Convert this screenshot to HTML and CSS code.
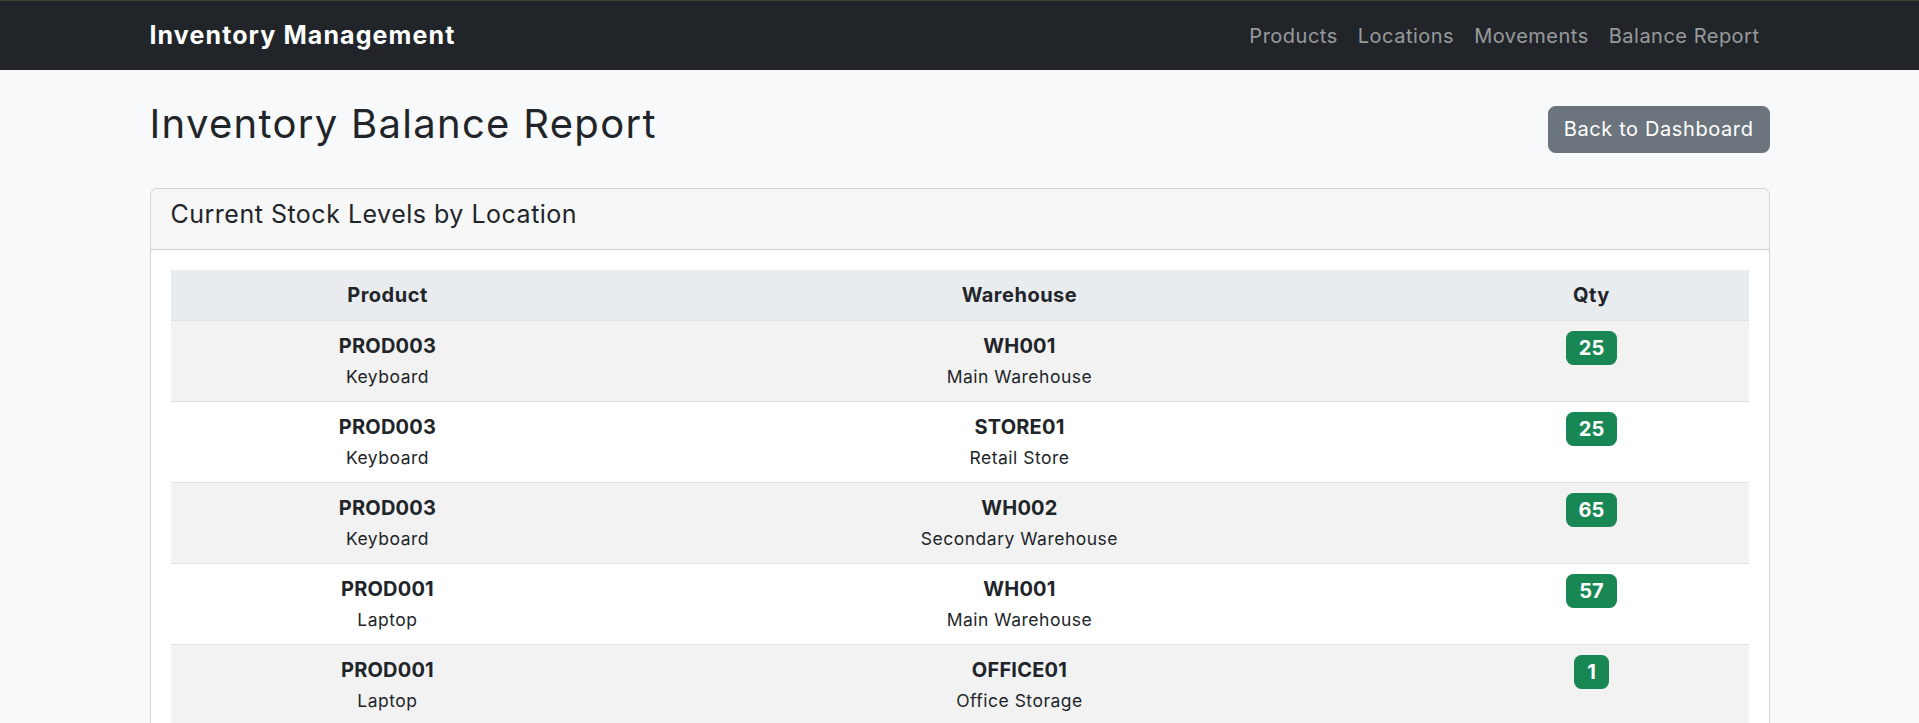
FILE: index.html
```html
<!DOCTYPE html>
<html lang="en">
<head>
<meta charset="utf-8">
<title>Inventory Balance Report</title>
<link rel="stylesheet" href="styles.css">
</head>
<body>
<nav class="navbar">
  <div class="container nav-inner">
    <a class="brand" href="#">Inventory Management</a>
    <ul class="nav-links">
      <li><a href="#">Products</a></li>
      <li><a href="#">Locations</a></li>
      <li><a href="#">Movements</a></li>
      <li><a href="#">Balance Report</a></li>
    </ul>
  </div>
</nav>
<main class="container page">
  <div class="page-head">
    <h2 class="page-title">Inventory Balance Report</h2>
    <a class="btn" href="#">Back to Dashboard</a>
  </div>
  <section class="card">
    <div class="card-header">
      <h5 class="card-title">Current Stock Levels by Location</h5>
    </div>
    <div class="card-body">
      <table class="report">
        <thead>
          <tr>
            <th class="col-product">Product</th>
            <th class="col-wh">Warehouse</th>
            <th class="col-qty">Qty</th>
          </tr>
        </thead>
        <tbody>
          <tr>
            <td><strong>PROD003</strong><br><small>Keyboard</small></td>
            <td><strong>WH001</strong><br><small>Main Warehouse</small></td>
            <td><span class="badge">25</span></td>
          </tr>
          <tr>
            <td><strong>PROD003</strong><br><small>Keyboard</small></td>
            <td><strong>STORE01</strong><br><small>Retail Store</small></td>
            <td><span class="badge">25</span></td>
          </tr>
          <tr>
            <td><strong>PROD003</strong><br><small>Keyboard</small></td>
            <td><strong>WH002</strong><br><small>Secondary Warehouse</small></td>
            <td><span class="badge">65</span></td>
          </tr>
          <tr>
            <td><strong>PROD001</strong><br><small>Laptop</small></td>
            <td><strong>WH001</strong><br><small>Main Warehouse</small></td>
            <td><span class="badge">57</span></td>
          </tr>
          <tr>
            <td><strong>PROD001</strong><br><small>Laptop</small></td>
            <td><strong>OFFICE01</strong><br><small>Office Storage</small></td>
            <td><span class="badge">1</span></td>
          </tr>
        </tbody>
      </table>
    </div>
  </section>
</main>
</body>
</html>
```
FILE: styles.css
```css
* { box-sizing: border-box; }
html, body { margin: 0; padding: 0; }
body {
  background: #f8f9fa;
  color: #212529;
  font-family: "Inter", "Open Sans", sans-serif;
  font-size: 20px;
  line-height: 1.5;
}
a { text-decoration: none; }

.container {
  max-width: 1650px;
  margin: 0 auto;
  padding: 0 15px;
}

.navbar {
  background: #212529;
  border-top: 1px solid #45432f;
  height: 70px;
}
.nav-inner {
  height: 100%;
  display: flex;
  align-items: center;
  justify-content: space-between;
}
.brand {
  color: #fff;
  font-size: 25px;
  font-weight: 700;
  letter-spacing: 1.1px;
}
.nav-links {
  list-style: none;
  margin: 0;
  padding: 0;
  display: flex;
}
.nav-links a {
  display: block;
  padding: 10px 10px;
  color: rgba(255, 255, 255, 0.55);
  font-size: 20px;
  letter-spacing: 0.5px;
}

.page { padding-top: 30px; }
.page-head {
  display: flex;
  justify-content: space-between;
  align-items: center;
  margin-bottom: 30px;
}
.page-title {
  margin: 0 0 10px;
  font-size: 40px;
  font-weight: 400;
  line-height: 1.2;
  letter-spacing: 1.3px;
}
.btn {
  display: inline-block;
  padding: 7.5px 15px;
  font-size: 20px;
  line-height: 30px;
  color: #fff;
  background: #6c757d;
  border: 1px solid #6c757d;
  border-radius: 7.5px;
  letter-spacing: 0.6px;
}

.card {
  background: #fff;
  border: 1px solid rgba(0, 0, 0, 0.175);
  border-radius: 7.5px;
  overflow: hidden;
}
.card-header {
  background: #f7f7f7;
  padding: 10px 20px;
  border-bottom: 1px solid rgba(0, 0, 0, 0.175);
}
.card-title {
  margin: 0 0 10px;
  font-size: 25px;
  font-weight: 400;
  line-height: 1.2;
  letter-spacing: 0.5px;
}
.card-body { padding: 20px; }

.report {
  width: 100%;
  border-collapse: collapse;
}
.report th,
.report td {
  padding: 10px;
  text-align: center;
  vertical-align: top;
  line-height: 30px;
  border-bottom: 1px solid #dee2e6;
}
.report th {
  background: #e9ecef;
  font-weight: 700;
  letter-spacing: 0.5px;
}
.col-product { width: 27.5%; }
.col-wh { width: 52.6%; }
.report tbody tr:nth-child(odd) td { background: #f2f2f2; }
.report strong { font-weight: 700; letter-spacing: 0.2px; }
.report small { font-size: 17.5px; line-height: 1.5; letter-spacing: 0.5px; }

.badge {
  display: inline-block;
  padding: 7px 13px;
  font-size: 20px;
  font-weight: 700;
  line-height: 1;
  color: #fff;
  background: #198754;
  border-radius: 7.5px;
}
```
